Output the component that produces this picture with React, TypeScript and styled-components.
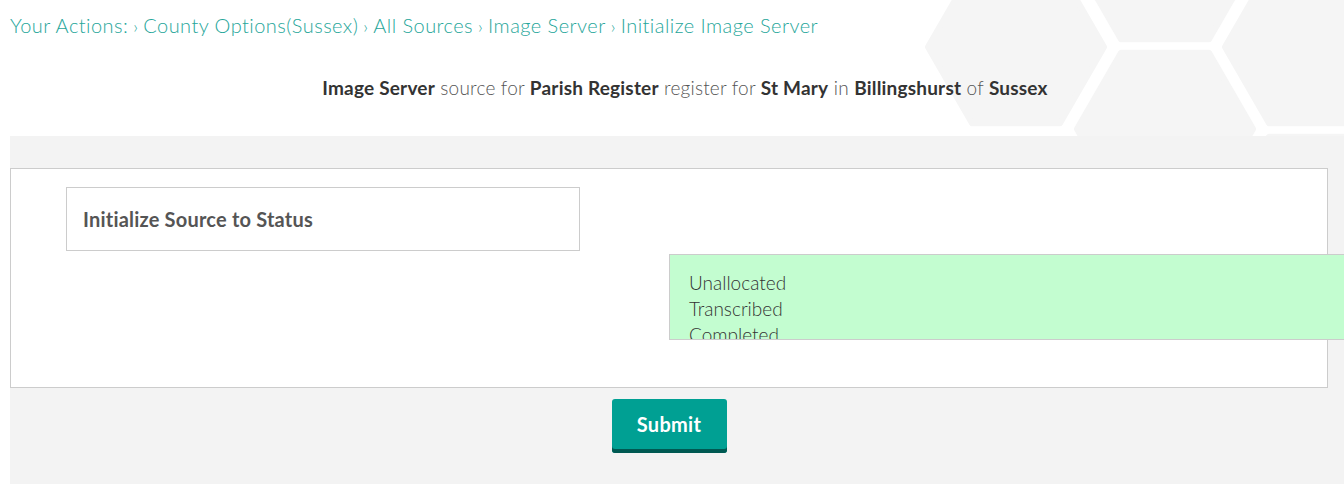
import React from "react";
import styled, { createGlobalStyle } from "styled-components";

const GlobalStyle = createGlobalStyle`
  html, body {
    margin: 0;
    padding: 0;
    background: #ffffff;
    overflow: hidden;
  }
  body {
    font-family: "Lato", "Open Sans", sans-serif;
  }
  * { box-sizing: border-box; }
`;

const Page = styled.div`
  width: 1344px;
  height: 484px;
  position: relative;
  overflow: hidden;
  background: #ffffff;
`;

const Header = styled.header`
  position: relative;
  height: 136px;
  padding: 11px 10px 0 10px;
`;

const HexArt = styled.svg`
  position: absolute;
  top: 0;
  left: 0;
  z-index: 0;
  pointer-events: none;
`;

const Breadcrumbs = styled.nav`
  position: relative;
  z-index: 1;
  font-size: 20px;
  font-weight: 300;
  color: #26a69a;
  line-height: 28px;
  letter-spacing: 0.45px;
`;

const Crumb = styled.span``;

const Sep = styled.span`
  margin: 0 5px;
  font-size: 17px;
`;

const Subtitle = styled.p`
  position: relative;
  z-index: 1;
  margin: 34px 0 0 0;
  text-align: center;
  font-size: 19px;
  line-height: 26px;
  color: #555555;
  font-weight: 300;
  letter-spacing: 0.2px;
  padding-left: 26px;
`;

const Strong = styled.b`
  font-weight: 700;
  color: #333333;
`;

const Body = styled.main`
  margin-left: 10px;
  background: #f3f3f3;
  height: 348px;
  padding: 32px 16px 0 0;
`;

const Panel = styled.div`
  width: 1318px;
  height: 220px;
  background: #ffffff;
  border: 1px solid #cccccc;
  padding: 18px 0 0 55px;
  display: flex;
  flex-direction: column;
`;

const LabelBox = styled.div`
  width: 514px;
  height: 64px;
  border: 1px solid #cccccc;
  display: flex;
  align-items: center;
  padding-left: 16px;
  font-size: 20px;
  font-weight: 700;
  letter-spacing: 0.2px;
  color: #555555;
`;

const StatusList = styled.div`
  margin: 3px 0 0 603px;
  width: 700px;
  height: 86px;
  background: #c3fdd0;
  border: 1px solid #cccccc;
  overflow: hidden;
  padding: 15px 0 0 19px;
`;

const StatusOption = styled.div`
  font-size: 19px;
  font-weight: 300;
  line-height: 26px;
  color: #333333;
`;

const Actions = styled.div`
  width: 1318px;
  display: flex;
  justify-content: center;
  padding-top: 11px;
`;

const SubmitButton = styled.button`
  width: 115px;
  height: 54px;
  border: none;
  border-radius: 3px;
  background: #00a093;
  box-shadow: inset 0 -4px 0 #005952;
  color: #ffffff;
  font-family: "Lato", sans-serif;
  font-size: 20px;
  font-weight: 700;
  letter-spacing: 0.3px;
  padding: 0 0 5px 0;
  cursor: pointer;
`;

const hexPoints = (cx: number, cy: number, r: number) => {
  const pts: string[] = [];
  for (let i = 0; i < 6; i++) {
    const a = (Math.PI / 3) * i;
    pts.push(`${(cx + r * Math.cos(a)).toFixed(1)},${(cy + r * Math.sin(a)).toFixed(1)}`);
  }
  return pts.join(" ");
};

const hexes = [
  { cx: 1016, cy: 47 },
  { cx: 1165, cy: -37 },
  { cx: 1165, cy: 129 },
  { cx: 1313, cy: 47 },
  { cx: 1313, cy: 213 },
];

const crumbs = [
  "Your Actions:",
  "County Options(Sussex)",
  "All Sources",
  "Image Server",
  "Initialize Image Server",
];

export default function App() {
  return (
    <Page>
      <GlobalStyle />
      <Header>
        <HexArt width="1344" height="136" viewBox="0 0 1344 136">
          {hexes.map((h, i) => (
            <polygon
              key={i}
              points={hexPoints(h.cx, h.cy, 88)}
              fill="#f5f5f5"
              stroke="#f5f5f5"
              strokeWidth="6"
              strokeLinejoin="round"
            />
          ))}
        </HexArt>
        <Breadcrumbs>
          {crumbs.map((c, i) => (
            <React.Fragment key={c}>
              {i > 0 && <Sep>›</Sep>}
              <Crumb>{c}</Crumb>
            </React.Fragment>
          ))}
        </Breadcrumbs>
        <Subtitle>
          <Strong>Image Server</Strong> source for <Strong>Parish Register</Strong> register for{" "}
          <Strong>St Mary</Strong> in <Strong>Billingshurst</Strong> of <Strong>Sussex</Strong>
        </Subtitle>
      </Header>
      <Body>
        <Panel>
          <LabelBox>Initialize Source to Status</LabelBox>
          <StatusList>
            <StatusOption>Unallocated</StatusOption>
            <StatusOption>Transcribed</StatusOption>
            <StatusOption>Completed</StatusOption>
          </StatusList>
        </Panel>
        <Actions>
          <SubmitButton>Submit</SubmitButton>
        </Actions>
      </Body>
    </Page>
  );
}
